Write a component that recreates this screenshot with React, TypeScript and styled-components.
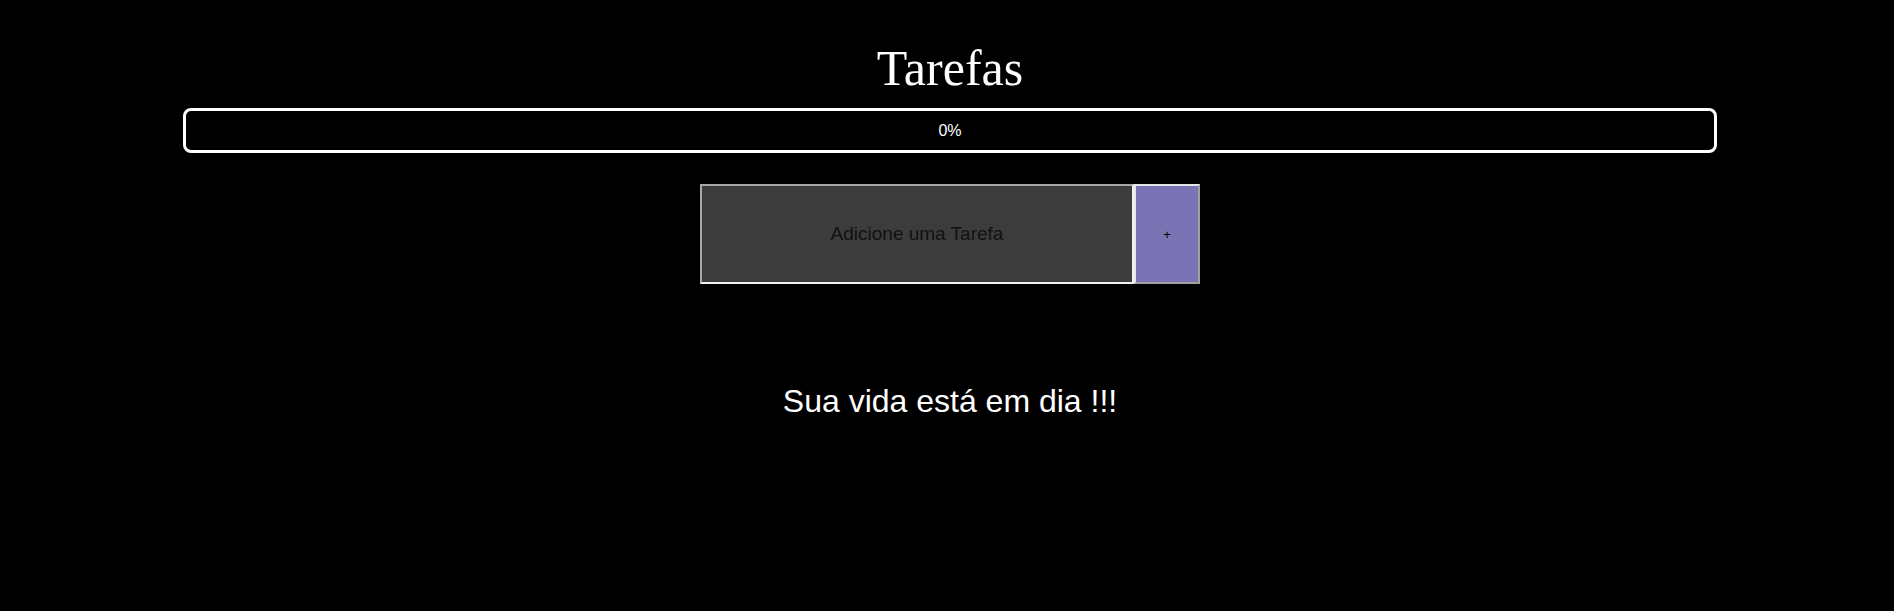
import React from "react";
import styled, { createGlobalStyle } from "styled-components";

const GlobalStyle = createGlobalStyle`
  html, body {
    margin: 0;
    padding: 0;
    background: #000;
  }
  body {
    font-family: "Liberation Sans", Arial, sans-serif;
    color: #fff;
  }
`;

const Page = styled.div`
  box-sizing: border-box;
  width: 100%;
  min-height: 611px;
  padding-left: 6px;
  display: flex;
  flex-direction: column;
  align-items: center;
  background: #000;
`;

const Title = styled.h1`
  margin: 40px 0 0;
  font-family: "Liberation Serif", "Times New Roman", serif;
  font-weight: 400;
  font-size: 50px;
  line-height: 56px;
  color: #fff;
`;

const ProgressBar = styled.div`
  box-sizing: border-box;
  margin-top: 12px;
  width: 1534px;
  height: 45px;
  border: 3px solid #fff;
  border-radius: 8px;
  display: flex;
  align-items: center;
  justify-content: center;
  font-size: 16px;
  color: #fff;
`;

const Form = styled.form`
  margin-top: 31px;
  display: flex;
`;

const TaskInput = styled.input`
  box-sizing: border-box;
  width: 434px;
  height: 100px;
  margin: 0;
  padding: 0 8px;
  background: #3c3c3c;
  border-style: solid;
  border-width: 2px;
  border-color: #a9a9a9 #f2f2f2 #f2f2f2 #a9a9a9;
  font-family: "Liberation Sans", Arial, sans-serif;
  font-size: 19px;
  color: #111;
  text-align: center;
  outline: none;
  &::placeholder {
    color: #111;
    opacity: 1;
  }
`;

const AddButton = styled.button`
  box-sizing: border-box;
  width: 66px;
  height: 100px;
  margin: 0;
  padding: 0;
  background: #7a74b5;
  border-style: solid;
  border-width: 2px;
  border-color: #e6e6e6 #a0a0a0 #a0a0a0 #e6e6e6;
  font-family: "Liberation Sans", Arial, sans-serif;
  font-size: 13px;
  color: #000;
  cursor: pointer;
`;

const Message = styled.h2`
  margin: 99px 0 0;
  font-weight: 400;
  font-size: 32px;
  line-height: 37px;
  color: #fff;
`;

export default function App() {
  const done = 0;
  return (
    <>
      <GlobalStyle />
      <Page>
        <Title>Tarefas</Title>
        <ProgressBar>{done}%</ProgressBar>
        <Form onSubmit={(e) => e.preventDefault()}>
          <TaskInput placeholder="Adicione uma Tarefa" />
          <AddButton type="submit">+</AddButton>
        </Form>
        <Message>Sua vida está em dia !!!</Message>
      </Page>
    </>
  );
}
